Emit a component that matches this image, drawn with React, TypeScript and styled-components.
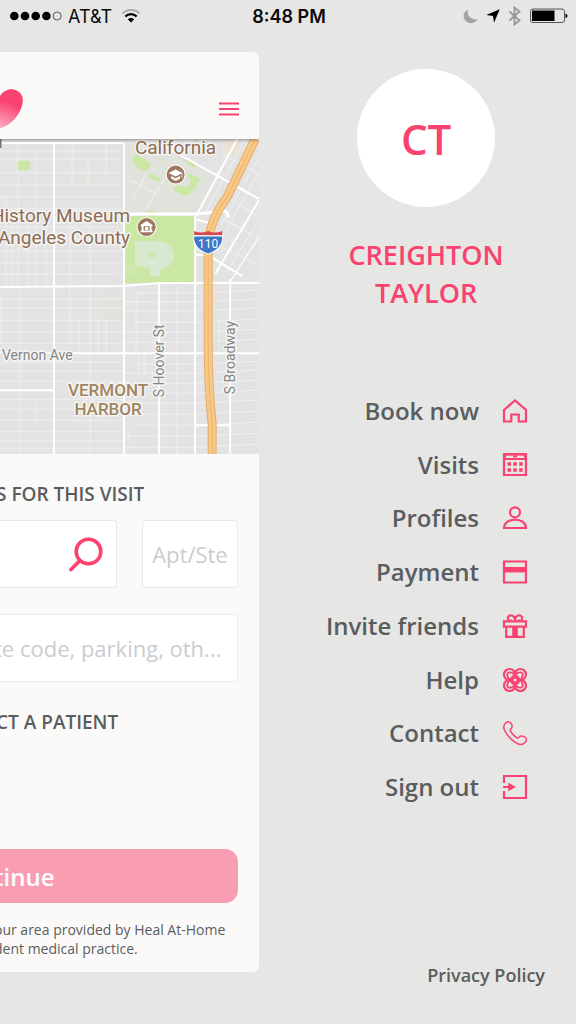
import React from 'react';
import styled, { createGlobalStyle } from 'styled-components';

const pink = '#fa4270';
const slate = '#5a5d5f';

const GlobalStyle = createGlobalStyle`
  * { box-sizing: border-box; }
  body {
    margin: 0;
    background: #e6e6e4;
    color: ${slate};
    font-family: 'Open Sans', sans-serif;
  }
  button, input { font-family: inherit; }
`;

const Page = styled.div`
  display: flex;
  flex-direction: column;
  min-height: 100vh;
  overflow: hidden;
`;

const StatusBar = styled.header`
  display: grid;
  grid-template-columns: 1fr auto 1fr;
  align-items: center;
  height: 32px;
  margin-bottom: 20px;
  padding: 0 8px 0 10px;
  color: #0a0a0a;
  font-family: Inter, sans-serif;
  font-size: 18px;
`;

const StatusGroup = styled.div<{ $end?: boolean }>`
  display: flex;
  align-items: center;
  gap: ${(p) => (p.$end ? 8 : 6)}px;
  justify-content: ${(p) => (p.$end ? 'flex-end' : 'flex-start')};
`;

const Clock = styled.time`
  font-weight: 600;
`;

const Columns = styled.div`
  display: grid;
  grid-template-columns: 45% 1fr;
  flex: 1;
`;

const Sheet = styled.main`
  display: flex;
  flex-direction: column;
  align-self: start;
  min-height: 920px;
  overflow: hidden;
  border-radius: 0 7px 7px 0;
  background: #fcfaf8;
`;

const SheetHeader = styled.div`
  display: flex;
  justify-content: space-between;
  align-items: flex-end;
  position: relative;
  height: 87px;
  padding-right: 20px;
  box-shadow: 0 1px 3px rgba(0, 0, 0, 0.4);
`;

const Logo = styled.svg`
  width: 24px;
  height: 42px;
  margin-bottom: 9px;
`;

const MenuButton = styled.button`
  display: flex;
  margin-bottom: 23px;
  padding: 0;
  border: 0;
  background: none;
`;

const MapArt = styled.svg`
  display: block;
  width: 100%;
  height: 315px;
  background: #e3e3e3;
  font-family: Roboto, sans-serif;
`;

const Form = styled.form`
  display: flex;
  flex-direction: column;
  padding: 26px 21px 14px 0;
`;

const Heading = styled.h2`
  height: 28px;
  margin: 0 0 12px -4px;
  font-size: 19px;
  font-weight: 600;
  line-height: 28px;
  white-space: nowrap;
`;

const FieldRow = styled.div`
  display: grid;
  grid-template-columns: 1fr 96px;
  gap: 25px;
  margin-bottom: 26px;
`;

const Field = styled.div`
  display: flex;
  align-items: center;
  height: 68px;
  min-width: 0;
  border: 1px solid #e9e8e6;
  border-left-width: 0;
  border-radius: 0 4px 4px 0;
  background: #fff;
`;

const AptField = styled(Field)`
  border-left-width: 1px;
  border-radius: 4px;
  padding-left: 9px;
`;

const NotesField = styled(Field)`
  margin-bottom: 26px;
`;

const TextInput = styled.input<{ $bleed?: boolean }>`
  flex: 1;
  min-width: 0;
  height: 100%;
  margin-left: ${(p) => (p.$bleed ? -6 : 0)}px;
  padding: 0;
  border: 0;
  outline: 0;
  background: transparent;
  color: ${slate};
  font-size: 22px;
  &::placeholder { color: #cbccd1; opacity: 1; }
`;

const SearchButton = styled(MenuButton)`
  margin: 0 12px 0 0;
`;

const Continue = styled.button`
  height: 54px;
  margin: 101px 0 17px;
  padding: 0;
  overflow: hidden;
  border: 0;
  border-radius: 0 13px 13px 0;
  background: #f99db3;
  color: #fff;
  font-size: 24px;
  font-weight: 600;
  text-align: left;
  text-indent: -6px;
`;

const Legal = styled.p`
  margin: 0 0 0 -6px;
  font-size: 14px;
  line-height: 19px;
  white-space: nowrap;
`;

const Drawer = styled.aside`
  display: flex;
  flex-direction: column;
  padding: 17px 0 36px;
`;

const Profile = styled.div`
  display: flex;
  flex-direction: column;
  align-items: center;
  padding-left: 17px;
`;

const Avatar = styled.div`
  display: flex;
  align-items: center;
  justify-content: center;
  width: 138px;
  height: 138px;
  margin-bottom: 29px;
  border-radius: 50%;
  background: #fff;
  color: ${pink};
  font-size: 42px;
  font-weight: 600;
`;

const Name = styled.h1`
  max-width: 200px;
  margin: 0 0 72px;
  color: ${pink};
  font-size: 27px;
  font-weight: 600;
  line-height: 38px;
  text-align: center;
`;

const Menu = styled.nav`
  display: grid;
  grid-auto-rows: 1fr;
  height: 430px;
  padding-right: 49px;
`;

const MenuLink = styled.a`
  display: flex;
  align-items: center;
  justify-content: flex-end;
  gap: 24px;
  color: ${slate};
  font-size: 24px;
  font-weight: 600;
  line-height: 32px;
  text-decoration: none;
`;

const Icon = styled.svg`
  width: 24px;
  height: 24px;
  overflow: visible;
  fill: none;
  stroke: ${pink};
  stroke-width: 2.2;
`;

const Privacy = styled.a`
  align-self: flex-end;
  margin-top: auto;
  padding-right: 31px;
  color: ${slate};
  font-size: 18px;
  font-weight: 600;
  line-height: 26px;
  text-decoration: none;
`;

const items: { label: string; art: React.ReactNode }[] = [
  {
    label: 'Book now',
    art: <path d="M1 22.5V11L12 1.4 23 11V22.5H15.7V15.5H8.3V22.5Z" />,
  },
  {
    label: 'Visits',
    art: (
      <>
        <path d="M1 1.5H23V22H1ZM1 6H23" />
        <path d="M0 1.2H24M10 3.5H14M0 3.5H3M21 3.5H24" />
        <path d="M4.5 11H8M10.3 11H13.8M16.2 11H19.7M4.5 17H8M10.3 17H13.8M16.2 17H19.7" strokeWidth="3.4" />
      </>
    ),
  },
  {
    label: 'Profiles',
    art: (
      <>
        <circle cx="12" cy="6.3" r="5" />
        <path d="M1 22C1 17 6 13.6 12 13.6S23 17 23 22Z" />
      </>
    ),
  },
  {
    label: 'Payment',
    art: (
      <>
        <path d="M1 1.5H23V22.5H1Z" />
        <path d="M1 9.7H23" strokeWidth="5.4" />
      </>
    ),
  },
  {
    label: 'Invite friends',
    art: (
      <>
        <path d="M1 7.3H23V12.7H1ZM3.2 13V22.8H20.8V13" />
        <path d="M12 13V23" strokeWidth="5.6" />
        <path d="M6 7C3.8 4 5.2 1.3 7.8 1.3C10.4 1.3 12 3.6 12 7C12 3.6 13.6 1.3 16.2 1.3C18.8 1.3 20.2 4 18 7M8 7V5.5M16 7V5.5" />
      </>
    ),
  },
  {
    label: 'Help',
    art: (
      <>
        <circle cx="6.6" cy="6.6" r="5.6" />
        <circle cx="17.4" cy="6.6" r="5.6" />
        <circle cx="6.6" cy="17.4" r="5.6" />
        <circle cx="17.4" cy="17.4" r="5.6" />
        <g strokeWidth="1.8">
          <ellipse cx="12" cy="12" rx="10" ry="4.2" transform="rotate(45 12 12)" />
          <ellipse cx="12" cy="12" rx="10" ry="4.2" transform="rotate(-45 12 12)" />
        </g>
        <circle cx="12" cy="12" r="2.6" fill="#e6e6e4" />
      </>
    ),
  },
  {
    label: 'Contact',
    art: (
      <path
        d="M3.2 1.6C5.3.1 7.5.8 8.6 3.2C9.6 5.5 9.4 6.6 7.8 8C6.9 8.9 7 9.6 8 11C9.6 13.3 11 14.8 13.2 16.4C14.5 17.3 15.2 17.2 16.2 16.1C17.5 14.6 18.7 14.5 21 15.6C23.8 17 24.2 18.8 22.4 21C20.3 23.6 17.4 24.3 14 22.4C8.5 19.3 4.4 14.8 1.6 9.4C0 6.2.5 3.6 3.2 1.6Z"
        strokeWidth="1.5"
      />
    ),
  },
  {
    label: 'Sign out',
    art: (
      <>
        <path d="M1 8V1H23V23H1V16M0 12H7" />
        <path d="M5.5 8.2L12.5 12L5.5 15.8Z" fill={pink} strokeWidth="0.6" />
      </>
    ),
  },
];

const minorRows = [12, 20, 34, 46, 58, 70, 88, 100, 112, 124, 135, 160, 169, 181, 193, 204, 223, 232, 242, 260, 270, 281, 292, 302, 309];
const eastRows = [154, 163, 172, 183, 193, 203, 225, 234, 244, 254, 264, 275, 286, 297, 308];

function CityMap() {
  return (
    <MapArt viewBox="0 0 259 315" preserveAspectRatio="xMaxYMin slice" role="img" aria-label="Map of Vermont Harbor">
      <g fill="#e1e2dc">
        <path d="M125 5L166 8L217 38L197 76H125Z" />
        <path d="M104 154H123V181H104ZM57 221H71V230H57ZM213 198H229V214H213ZM75 40H98V48H75ZM107 276H123V282H107Z" />
      </g>
      <g fill="none" stroke="#efefef" strokeWidth="1">
        {minorRows.map((y) => (
          <path key={y} d={`M0 ${y}H${y < 145 ? 118 : 124}`} />
        ))}
        {eastRows.map((y, i) => (
          <path key={y} d={`M${i % 3 === 0 ? 136 : 124} ${y}H195L259 ${y - 3}`} />
        ))}
        <path d="M18 4V147M36 12V70M72 4V46M88 20V50M106 4V35M6 58V147M12 70V147M20 147V281M28 70V147M36 70V147M46 78V147M70 78V204M90 78V315M79 181V213M98 181V213M106 181V213M20 281V315M36 265V281M139 214V240M144 214V236M129 290V304M136 154V213M219 180V213M1 154V204M177 147V315" />
        <path d="M245 0L204 76M259 18L220 88M259 33L222 98M259 80L226 134M259 96L236 134M222 15L259 35M226 58L259 78M219 78L259 99M212 104L259 126M130 41L155 54L146 70M155 54L166 38M133 61L145 36" />
      </g>
      <g fill="#cbe7a4">
        <path d="M125 77H194V144H125ZM18 22H30V31H18ZM132 20L136 15L142 19L145 20L151 26L146 33L140 30L135 26ZM150 34L160 39L159 43L148 38ZM187 34L200 39L194 51L187 57L182 56L173 51L177 46L188 48L191 41L187 38ZM147 71L156 73V77H146ZM186 18L196 26L193 29L185 22ZM72 247H89V253H72ZM196 0L198 2L193 4Z" />
      </g>
      <path d="M135 102H158C168 103 174 109 174 117C173 125 168 129 160 130V137H150V130L135 126Z" fill="#d9e8d0" />
      <path d="M148 113H156V119H148ZM126 126H134V136H126Z" fill="#cfe7b3" />
      <g fill="#f5dfc5" opacity=".65">
        <path d="M229 0L240 4L235 18L225 11ZM216 146H219L216 163L213 166ZM214 260L217 280L213 290Z" />
      </g>
      <g fill="none" stroke="#fff" strokeWidth="2">
        <path d="M0 4H124M54 4V315M124 4V315M159 144V315M195 77V315M230 140V315" />
        <path d="M0 148L124 147L159 144H259M0 213L60 214H259M0 251H54M195 286H230" />
        <path d="M124 75H196L225 72L229 78" strokeWidth="3" />
        <path d="M237 0L196 77M166 8L259 60M259 61L215 135M195 80L212 85M196 116H208L242 137" />
        <path d="M259 98L229 144" strokeWidth="1" />
      </g>
      <g fill="none" strokeLinejoin="round">
        <path d="M255 0L227 58Q209 82 208 106V200Q208 248 212 285V315" stroke="#e4ad68" strokeWidth="9" />
        <path d="M255 0L227 58Q209 82 208 106V200Q208 248 212 285V315" stroke="#f8c986" strokeWidth="7" />
        <path d="M255 0L227 58Q209 82 208 106V200Q208 248 212 285V315" stroke="#e8b472" strokeWidth="1" />
      </g>
      <path d="M194 92Q201 95 208 92Q215 95 222 92V96H194Z" fill="#d9474d" />
      <path d="M193.5 97H222.5C223 106 217 112 208 115C199 112 193 106 193.5 97Z" fill="#3c78c6" stroke="#fff" strokeWidth="1" />
      <text x="208" y="109" fill="#fff" fontSize="12" textAnchor="middle">110</text>
      <g fill="#9d7860" stroke="#fff" strokeWidth="1">
        <circle cx="175.5" cy="35.5" r="9.5" />
        <circle cx="146.5" cy="88" r="9.5" />
      </g>
      <path d="M168.5 34L175.5 30.5L182.5 34L175.5 37.5ZM171 37L175.5 39.3L180 37V39.5L175.5 42L171 39.5ZM181.5 34V39H182.3V34Z" fill="#fff" />
      <path d="M140.5 86L146.5 82L152.5 86V87.3H140.5ZM141.5 87H143.5V92H141.5ZM149.5 87H151.5V92H149.5ZM140.5 91.5H152.5V93.3H140.5ZM145 88H148V91H145Z" fill="#fff" />
      <g stroke="#f5f4f2" strokeWidth="3" strokeLinejoin="round" paintOrder="stroke">
        <g fill="#8d6c55" fontSize="19">
          <text x="216" y="15" textAnchor="end">California</text>
          <text x="130" y="83" textAnchor="end">History Museum</text>
          <text x="130" y="105" textAnchor="end">Angeles County</text>
        </g>
        <g fill="#a08460" fontSize="17" fontWeight="500" textAnchor="middle">
          <text x="108" y="257">VERMONT</text>
          <text x="108" y="276">HARBOR</text>
        </g>
        <g fill="#858585" fontSize="14">
          <text x="2" y="221">Vernon Ave</text>
          <text transform="translate(164 258) rotate(-90)">S Hoover St</text>
          <text transform="translate(235 255) rotate(-90)">S Broadway</text>
        </g>
      </g>
      <path d="M0 0H1.5V9H0Z" fill="#777" />
    </MapArt>
  );
}

export default function App() {
  return (
    <Page>
      <GlobalStyle />
      <StatusBar>
        <StatusGroup>
          <svg width="52" height="10" viewBox="0 0 52 10">
            <g fill="#000">
              <circle cx="4.3" cy="5" r="4.3" />
              <circle cx="15" cy="5" r="4.3" />
              <circle cx="25.7" cy="5" r="4.3" />
              <circle cx="36.4" cy="5" r="4.3" />
            </g>
            <circle cx="47.2" cy="5" r="4" fill="none" stroke="#333" strokeWidth=".8" />
          </svg>
          <span>AT&amp;T</span>
          <svg width="24" height="16" viewBox="-3 0 24 16" fill="none">
            <path d="M1.5 5.5C6 .8 14 .8 18.5 5.5" stroke="#aaa" strokeWidth="2" />
            <path d="M4.3 8.5C7.5 5.3 12.5 5.3 15.7 8.5" stroke="#000" strokeWidth="2.2" />
            <path d="M6.8 11.3C8.6 9.6 11.4 9.6 13.2 11.3L10 14.5Z" fill="#000" />
          </svg>
        </StatusGroup>
        <Clock>8:48 PM</Clock>
        <StatusGroup $end>
          <svg width="15" height="15" viewBox="0 0 15 15">
            <path d="M5 .8C3.5 6 7.5 11.2 14.5 10.3C12.5 14.2 7 15.5 3.4 12.6C-1 9 0 2.8 5 .8Z" fill="#a3a3a3" />
          </svg>
          <svg width="14" height="14" viewBox="0 0 14 14">
            <path d="M13.7.3L8 13.7L7 7L.3 6Z" fill="#000" />
          </svg>
          <svg width="13" height="20" viewBox="0 0 13 20" fill="none" stroke="#969696" strokeWidth="1.8">
            <path d="M1.5 5.5L11.5 14.5L6.5 18.5V1.5L11.5 5.5L1.5 14.5" />
          </svg>
          <svg width="39" height="16" viewBox="0 0 39 16">
            <rect x="1.5" y="1" width="34" height="13.5" rx="2.5" fill="none" stroke="#555" />
            <path d="M3 2.5H25.5V13H3Z" fill="#000" />
            <path d="M36.5 5.5Q38.5 6 38.5 8T36.5 10Z" fill="#000" />
          </svg>
        </StatusGroup>
      </StatusBar>

      <Columns>
        <Sheet>
          <SheetHeader>
            <Logo viewBox="0 0 24 42" aria-hidden="true">
              <defs>
                <radialGradient id="heart" cx="0" cy="42" r="30" gradientUnits="userSpaceOnUse">
                  <stop offset="0" stopColor="#fdb3c6" />
                  <stop offset="1" stopColor="#fa4270" />
                </radialGradient>
              </defs>
              <path d="M0 8C5-1 18-1 22 8C26 18 14 37 0 40Z" fill="url(#heart)" />
            </Logo>
            <MenuButton type="button" aria-label="Close menu">
              <svg width="20" height="14" viewBox="0 0 20 14" stroke={pink} strokeWidth="2.2">
                <path d="M0 1.5H20M0 7H20M0 12.5H20" />
              </svg>
            </MenuButton>
          </SheetHeader>
          <CityMap />
          <Form onSubmit={(e) => e.preventDefault()}>
            <Heading>S FOR THIS VISIT</Heading>
            <FieldRow>
              <Field>
                <TextInput aria-label="Address" />
                <SearchButton type="button" aria-label="Search">
                  <svg width="36" height="36" viewBox="0 0 36 36" fill="none" stroke={pink} strokeLinecap="round">
                    <circle cx="20.5" cy="15.5" r="12.3" strokeWidth="3.6" />
                    <path d="M11.5 25L3 33.5" strokeWidth="3.8" />
                  </svg>
                </SearchButton>
              </Field>
              <AptField>
                <TextInput aria-label="Apartment or suite" placeholder="Apt/Ste" />
              </AptField>
            </FieldRow>
            <NotesField>
              <TextInput $bleed aria-label="Notes" placeholder="te code, parking, oth..." />
            </NotesField>
            <Heading>CT A PATIENT</Heading>
            <Continue type="submit">tinue</Continue>
            <Legal>
              our area provided by Heal At-Home
              <br />
              dent medical practice.
            </Legal>
          </Form>
        </Sheet>

        <Drawer>
          <Profile>
            <Avatar>CT</Avatar>
            <Name>CREIGHTON TAYLOR</Name>
          </Profile>
          <Menu aria-label="Account">
            {items.map((item) => (
              <MenuLink href="#" key={item.label}>
                {item.label}
                <Icon viewBox="0 0 24 24" aria-hidden="true">{item.art}</Icon>
              </MenuLink>
            ))}
          </Menu>
          <Privacy href="#">Privacy Policy</Privacy>
        </Drawer>
      </Columns>
    </Page>
  );
}
